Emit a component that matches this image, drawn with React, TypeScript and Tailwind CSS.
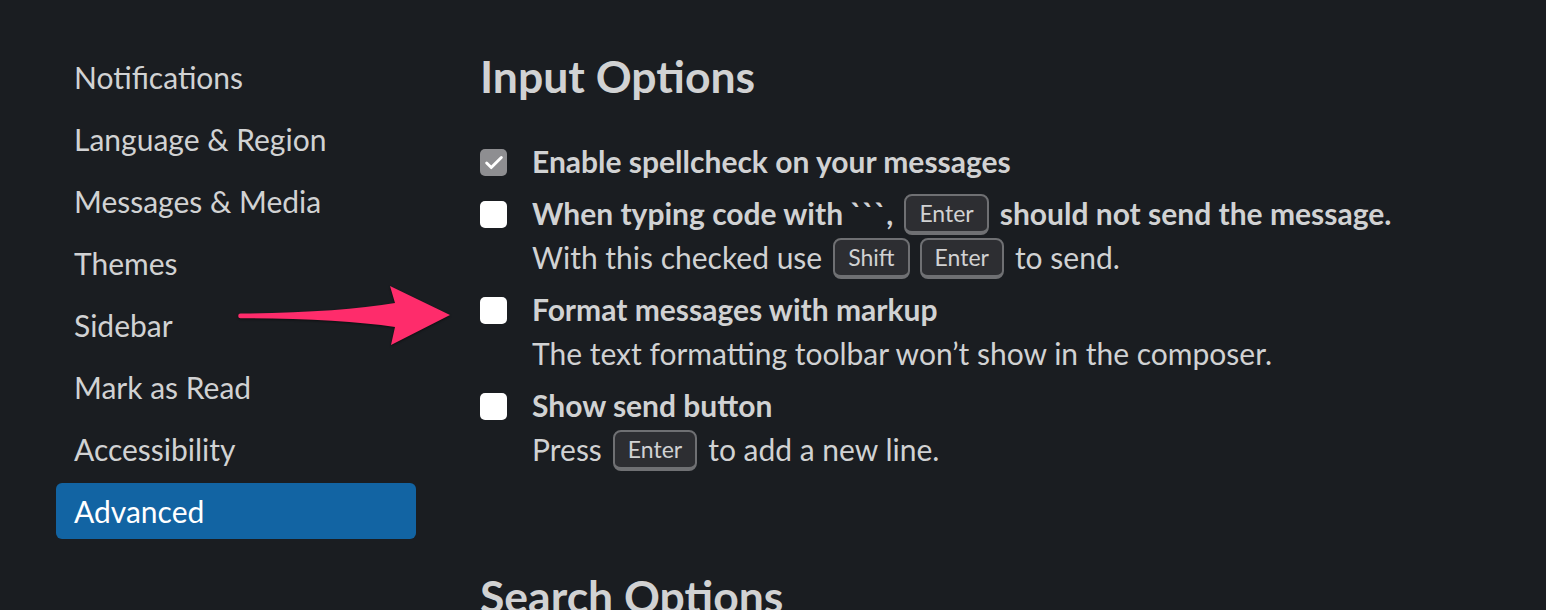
import { Check } from 'lucide-react'
import { ReactNode } from 'react'

const navItems = [
  'Notifications',
  'Language & Region',
  'Messages & Media',
  'Themes',
  'Sidebar',
  'Mark as Read',
  'Accessibility',
  'Advanced',
]

function Kbd({ children }: { children: ReactNode }) {
  return (
    <span className="flex h-[41px] items-center self-end rounded-[8px] border-2 border-b-4 border-[#6f7073] bg-[#2d2e32] px-[13px] text-[23px] leading-none font-normal text-[#d1d2d3]">
      {children}
    </span>
  )
}

function Checkbox({ checked }: { checked?: boolean }) {
  return (
    <span
      className={`mt-[10px] flex h-[27px] w-[27px] shrink-0 items-center justify-center rounded-[5px] ${
        checked ? 'bg-[#8e8e91]' : 'bg-white'
      }`}
    >
      {checked && <Check size={22} strokeWidth={3.2} className="text-white" />}
    </span>
  )
}

function Option({
  checked,
  label,
  hint,
}: {
  checked?: boolean
  label: ReactNode
  hint?: ReactNode
}) {
  return (
    <div className="flex gap-[25px]">
      <Checkbox checked={checked} />
      <div className="flex flex-col">
        <div className="flex h-[44px] items-center gap-[11px] text-[30px] leading-[44px] font-bold whitespace-nowrap">
          {label}
        </div>
        {hint && (
          <div className="flex h-[44px] items-center gap-[11px] text-[30px] leading-[44px] whitespace-nowrap">
            {hint}
          </div>
        )}
      </div>
    </div>
  )
}

function Arrow() {
  return (
    <svg
      width="216"
      height="66"
      viewBox="0 0 216 66"
      className="absolute top-[284px] left-[238px] drop-shadow-[0_1px_1px_rgba(0,0,0,0.5)]"
    >
      <path
        d="M 2.5 29.6 Q 100 28.5 157 19 L 152 2 L 212 31 L 153 61 L 157 43 Q 100 34.5 2.5 34.2 A 2.3 2.3 0 0 1 2.5 29.6 Z"
        fill="#fe2c6b"
      />
    </svg>
  )
}

export default function App() {
  return (
    <div className="relative flex h-[610px] w-[1546px] overflow-hidden bg-[#1a1d21] font-['Lato',sans-serif] text-[#d1d2d3]">
      <nav className="ml-[56px] flex w-[360px] shrink-0 flex-col gap-[6px] pt-[49px]">
        {navItems.map((item) => (
          <div
            key={item}
            className={`flex h-[56px] items-center rounded-[6px] px-[18px] text-[30px] ${
              item === 'Advanced' ? 'bg-[#1264a3] text-white' : ''
            }`}
          >
            {item}
          </div>
        ))}
      </nav>

      <main className="ml-[64px] flex flex-1 flex-col pt-[48px]">
        <h1 className="text-[44.5px] leading-[56px] font-bold">Input Options</h1>

        <div className="mt-[35px] flex flex-col gap-[8px]">
          <Option checked label="Enable spellcheck on your messages" />
          <Option
            label={
              <>
                <span>When typing code with ```,</span>
                <Kbd>Enter</Kbd>
                <span>should not send the message.</span>
              </>
            }
            hint={
              <>
                <span>With this checked use</span>
                <span className="flex gap-[10px] self-end">
                  <Kbd>Shift</Kbd>
                  <Kbd>Enter</Kbd>
                </span>
                <span>to send.</span>
              </>
            }
          />
          <Option
            label="Format messages with markup"
            hint="The text formatting toolbar won’t show in the composer."
          />
          <Option
            label="Show send button"
            hint={
              <>
                <span>Press</span>
                <Kbd>Enter</Kbd>
                <span>to add a new line.</span>
              </>
            }
          />
        </div>

        <div className="mt-[49px] h-[2px] bg-[#35373b]" />

        <h1 className="mt-[48px] text-[44.5px] leading-[56px] font-bold">Search Options</h1>
      </main>

      <Arrow />
    </div>
  )
}
